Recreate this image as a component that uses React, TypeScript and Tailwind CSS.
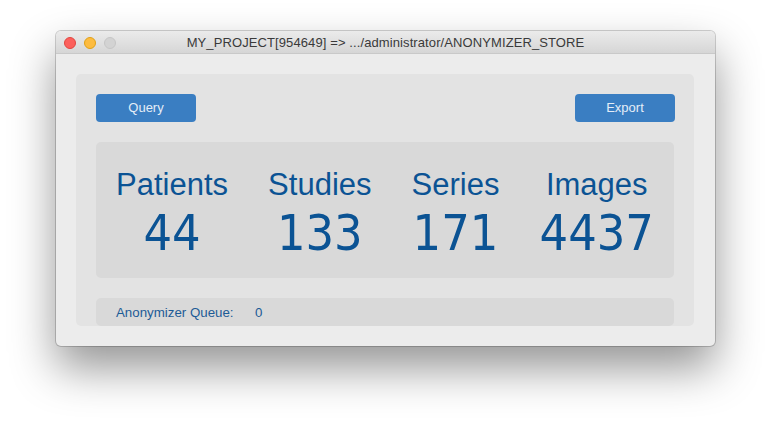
import React from "react"

const stats = [
  { label: "Patients", value: "44" },
  { label: "Studies", value: "133" },
  { label: "Series", value: "171" },
  { label: "Images", value: "4437" },
]

export default function App() {
  return (
    <div className="h-[426px] w-[771px] bg-white pl-[56px] pt-[31px] font-['Liberation_Sans',Arial,sans-serif]">
      <div className="flex h-[315px] w-[659px] flex-col overflow-hidden rounded-[5px] bg-[#ececec] shadow-[0_0_0_1px_rgba(0,0,0,0.18),0_22px_45px_rgba(0,0,0,0.42)]">
        {/* title bar */}
        <div className="relative flex h-[23px] shrink-0 items-center justify-center border-b border-[#c9c9c9] bg-gradient-to-b from-[#ebebeb] to-[#d6d6d6]">
          <div className="absolute left-[8px] top-[6px] flex gap-[8px]">
            <span className="h-[12px] w-[12px] rounded-full border border-[#e2463f] bg-[#fc605c]" />
            <span className="h-[12px] w-[12px] rounded-full border border-[#e1a116] bg-[#fdbc40]" />
            <span className="h-[12px] w-[12px] rounded-full border border-[#c6c6c6] bg-[#d3d3d3]" />
          </div>
          <span className="pt-[1px] text-[13px] tracking-[0.1px] text-[#3a3a3a]">MY_PROJECT[954649] =&gt; .../administrator/ANONYMIZER_STORE</span>
        </div>

        {/* body */}
        <div className="flex-1 pl-[20px] pr-[21px] pt-[20px]">
          <div className="flex h-[252px] flex-col overflow-hidden rounded-[5px] bg-[#e3e3e3] px-[20px] pt-[20px]">
            <div className="-mr-[1px] flex justify-between">
              <button className="h-[28px] w-[100px] rounded-[4px] bg-[#3a7ec2] text-[13px] text-[#e4edf7]">Query</button>
              <button className="h-[28px] w-[100px] rounded-[4px] bg-[#3a7ec2] text-[13px] text-[#e4edf7]">Export</button>
            </div>

            <div className="mt-[20px] flex h-[136px] items-start justify-around rounded-[5px] bg-[#d9d9d9] pt-[25px] text-[#0b5394]">
              {stats.map((s) => (
                <div key={s.label} className="flex flex-col items-center">
                  <span className="text-[31px] leading-[36px]">{s.label}</span>
                  <span className="mt-[4px] font-['DejaVu_Sans_Condensed','DejaVu_Sans',sans-serif] text-[50px] leading-[52px] [font-stretch:condensed]">
                    {s.value}
                  </span>
                </div>
              ))}
            </div>

            <div className="mt-[20px] flex h-[28px] items-center rounded-[5px] bg-[#d9d9d9] pl-[20px] pt-[2px] text-[13.3px] text-[#1d5b96]">
              <span className="w-[139px]">Anonymizer Queue:</span>
              <span>0</span>
            </div>
          </div>
        </div>
      </div>
    </div>
  )
}
